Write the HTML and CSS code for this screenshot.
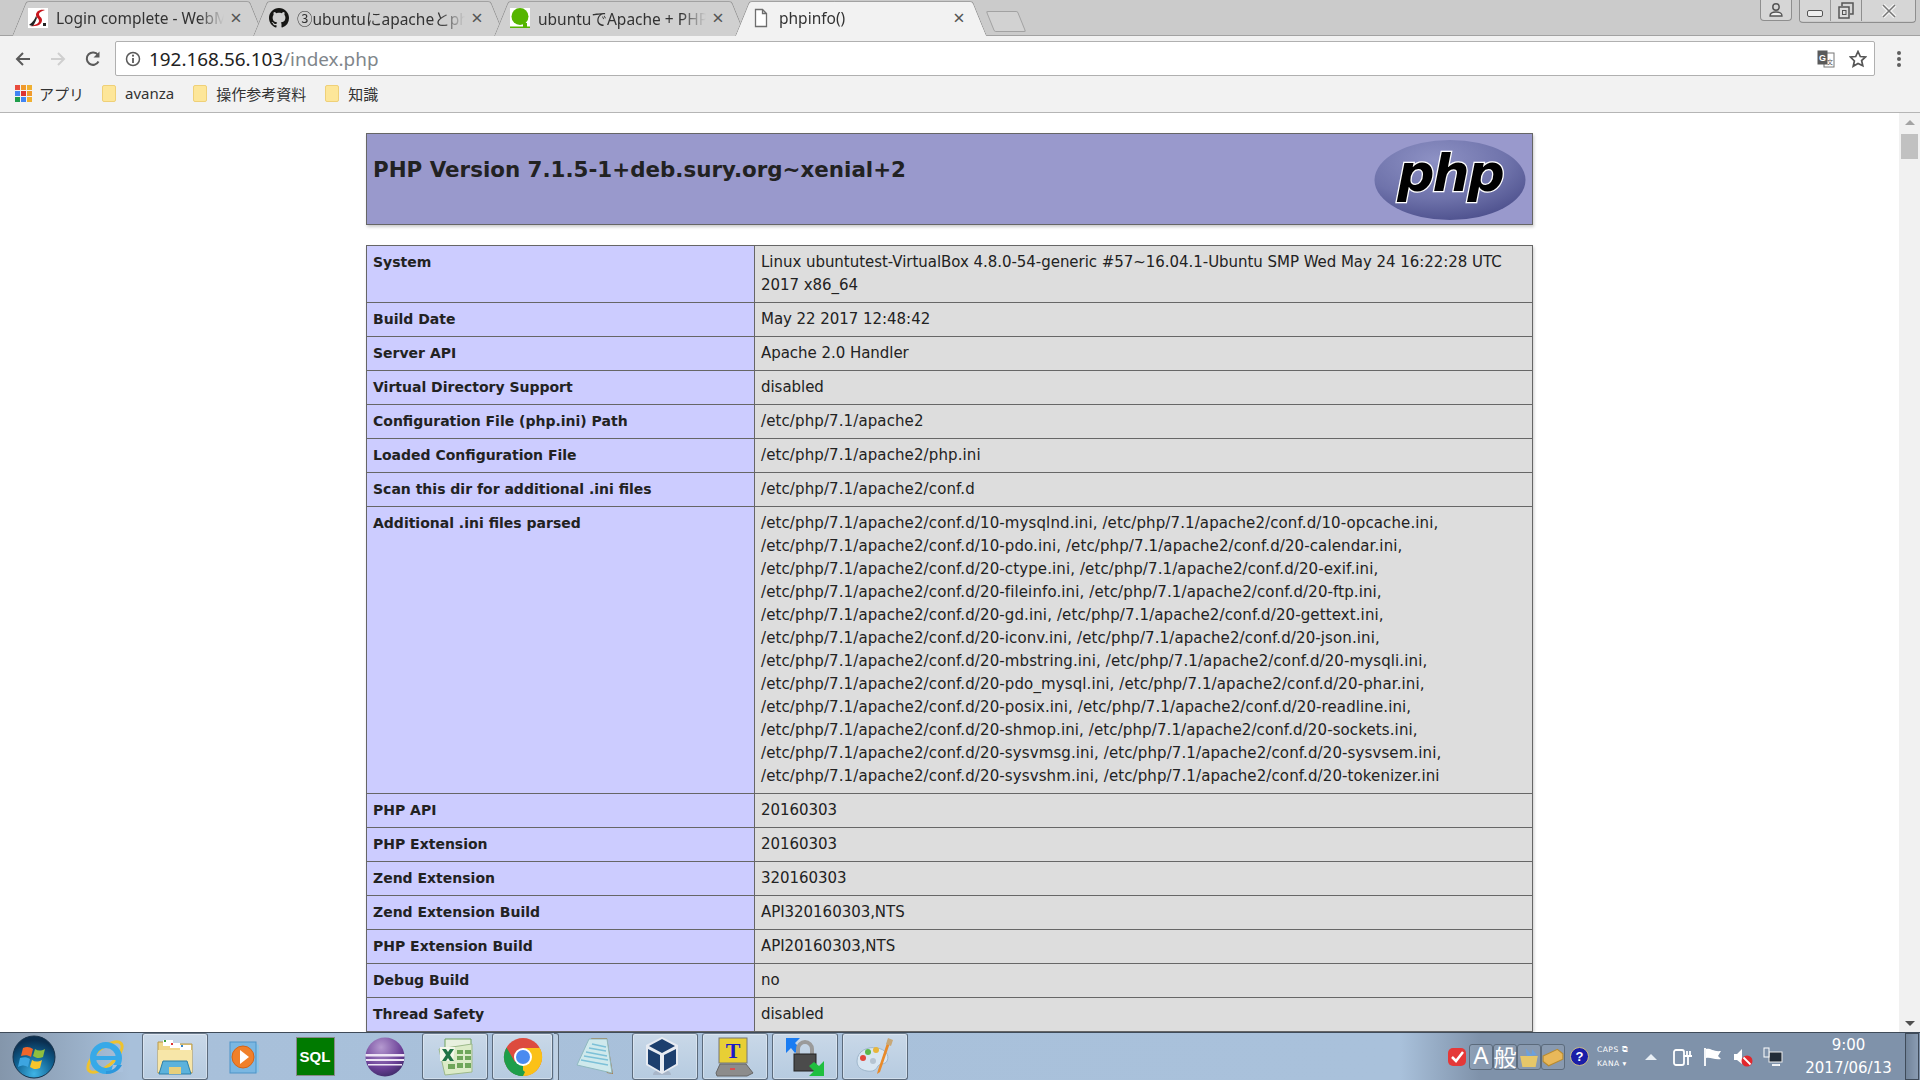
FILE: index.html
```html
<!DOCTYPE html>
<html lang="ja">
<head>
	<meta charset="UTF-8">
	<title>phpinfo()</title>
	<link rel="stylesheet" href="styles.css">
</head>
<body>
	<div class="tabstrip">
		<div class="tab">
			<svg class="favicon" viewBox="0 0 20 20"><rect width="20" height="20" fill="#fff"/><path d="M17 2C11 1 8 4 8 7c0 3 3 3 3 6 0 2-3 4-9 5 8 1 12-2 12-6 0-3-3-3-3-6 0-1 2-3 6-4z" fill="#c8161d"/><path d="M8 8c-1 3-3 6-7 9l4 1c2-3 3-6 4-8zM15 15l3 0 0 3-3 0z" fill="#222"/></svg>
			<span class="tab-title">Login complete - WebM</span>
			<span class="tab-close">×</span>
		</div>
		<div class="tab">
			<svg class="favicon" viewBox="0 0 16 16"><path fill="#161614" d="M8 0C3.58 0 0 3.58 0 8c0 3.54 2.29 6.53 5.47 7.59.4.07.55-.17.55-.38 0-.19-.01-.82-.01-1.49-2.01.37-2.53-.49-2.69-.94-.09-.23-.48-.94-.82-1.13-.28-.15-.68-.52-.01-.53.63-.01 1.08.58 1.23.82.72 1.21 1.87.87 2.33.66.07-.52.28-.87.51-1.07-1.78-.2-3.64-.89-3.64-3.95 0-.87.31-1.59.82-2.15-.08-.2-.36-1.02.08-2.12 0 0 .67-.21 2.2.82.64-.18 1.32-.27 2-.27s1.36.09 2 .27c1.53-1.04 2.2-.82 2.2-.82.44 1.1.16 1.92.08 2.12.51.56.82 1.27.82 2.15 0 3.07-1.87 3.75-3.65 3.95.29.25.54.73.54 1.48 0 1.07-.01 1.93-.01 2.2 0 .21.15.46.55.38A8.01 8.01 0 0 0 16 8c0-4.42-3.58-8-8-8z"/></svg>
			<span class="tab-title">③ubuntuにapacheとphp</span>
			<span class="tab-close">×</span>
		</div>
		<div class="tab">
			<svg class="favicon" viewBox="0 0 20 20"><rect width="20" height="20" fill="#fff"/><circle cx="10" cy="8.500" r="8.500" fill="#55b500"/><path d="M0 18.500h20V20H0zM13 15h4v4h-4z" fill="#55b500"/></svg>
			<span class="tab-title">ubuntuでApache + PHP</span>
			<span class="tab-close">×</span>
		</div>
		<div class="tab active">
			<svg class="favicon" viewBox="0 0 20 20"><path d="M4.500 1.500h7l4 4v13h-11zM11.500 1.500v4h4" fill="#fff" stroke="#6e6e6e" stroke-width="1.300"/></svg>
			<span class="tab-title">phpinfo()</span>
			<span class="tab-close">×</span>
		</div>
		<div class="newtab"></div>
		<div class="winbtns">
			<div class="winbtn profile">
				<svg viewBox="0 0 16 16" width="16" height="16"><circle cx="8" cy="5" r="3.200" fill="none" stroke="#555" stroke-width="1.500"/><path d="M2 14c0-3 3-4 6-4s6 1 6 4z" fill="#f0f0f0" stroke="#555" stroke-width="1.300"/></svg>
			</div>
			<div class="wingroup">
				<div class="winbtn win-min"><span class="min-glyph"></span></div>
				<div class="winbtn win-max">
					<svg viewBox="0 0 18 18" width="18" height="18"><path d="M5 4V1h11v11h-3" fill="none" stroke="#555" stroke-width="1.500"/><rect x="2" y="5" width="10" height="11" fill="#ddd" stroke="#555" stroke-width="1.500"/><rect x="5.500" y="8.500" width="3.500" height="4" fill="none" stroke="#555"/></svg>
				</div>
				<div class="winbtn win-close">
					<svg viewBox="0 0 16 14" width="16" height="14"><path d="M2 1l12 12M14 1L2 13" stroke="#f3f3f3" stroke-width="4"/><path d="M2 1l12 12M14 1L2 13" stroke="#777" stroke-width="1.500"/></svg>
				</div>
			</div>
		</div>
	</div>

	<div class="toolbar">
		<svg class="nav-icon" viewBox="0 0 18 18"><path d="M16 9H3M9 3L3 9l6 6" fill="none" stroke="#5a5a5a" stroke-width="2"/></svg>
		<svg class="nav-icon" viewBox="0 0 18 18"><path d="M2 9h13M9 3l6 6-6 6" fill="none" stroke="#cfcfcf" stroke-width="2"/></svg>
		<svg class="nav-icon" viewBox="0 0 18 18"><path d="M14.500 11.500A6.200 6.200 0 1 1 14 5" fill="none" stroke="#5a5a5a" stroke-width="2"/><path d="M15.500 1.500v6h-6z" fill="#5a5a5a"/></svg>
		<div class="omnibox">
			<svg class="info-icon" viewBox="0 0 16 16"><circle cx="8" cy="8" r="6.500" fill="none" stroke="#5a5a5a" stroke-width="1.500"/><path d="M8 7v5" stroke="#5a5a5a" stroke-width="1.800"/><circle cx="8" cy="4.700" r="1.100" fill="#5a5a5a"/></svg>
			<span class="url">192.168.56.103<span class="url-path">/index.php</span></span>
			<svg class="translate-icon" viewBox="0 0 18 18"><rect x="7" y="3" width="10" height="14" fill="#fff" stroke="#777"/><rect x="0.500" y="0.500" width="10" height="14" fill="#5a5a5a"/><text x="2" y="11" class="translate-g">G</text><text x="10" y="14" class="translate-x">文</text></svg>
			<svg class="star-icon" viewBox="0 0 18 18"><path d="M9 1.500l2.300 5 5.200.5-3.900 3.500 1.200 5.300L9 13.500l-4.800 2.800 1.200-5.300L1.500 7l5.200-.5z" fill="none" stroke="#555" stroke-width="1.700"/></svg>
		</div>
		<div class="kebab"><i></i><i></i><i></i></div>
	</div>

	<div class="bookmarks">
		<div class="bm bm-apps">
			<span class="apps-grid">
				<i class="c1"></i><i class="c2"></i><i class="c3"></i>
				<i class="c4"></i><i class="c5"></i><i class="c2"></i>
				<i class="c6"></i><i class="c7"></i><i class="c3"></i>
			</span>
			アプリ
		</div>
		<div class="bm"><span class="folder"></span>avanza</div>
		<div class="bm"><span class="folder"></span>操作参考資料</div>
		<div class="bm"><span class="folder"></span>知識</div>
	</div>

	<div class="viewport">
		<div class="page">
			<table class="php-head">
				<tr>
					<td class="head-cell">
						<svg class="php-logo" viewBox="0 0 152 82">
							<defs>
								<radialGradient id="logoFill" cx="0.400" cy="0.250" r="0.800">
									<stop offset="0" stop-color="#8d91c4"/>
									<stop offset="0.600" stop-color="#6f73ab"/>
									<stop offset="1" stop-color="#4c4f8c"/>
								</radialGradient>
							</defs>
							<ellipse cx="76" cy="41" rx="75.500" ry="40" fill="url(#logoFill)"/>
							<text x="76" y="52" class="php-word">php</text>
						</svg>
						<h1 class="head-title">PHP Version 7.1.5-1+deb.sury.org~xenial+2</h1>
					</td>
				</tr>
			</table>
			<table class="info">
				<tr><td class="e">System</td><td class="v">Linux ubuntutest-VirtualBox 4.8.0-54-generic #57~16.04.1-Ubuntu SMP Wed May 24 16:22:28 UTC<br>2017 x86_64</td></tr>
				<tr><td class="e">Build Date</td><td class="v">May 22 2017 12:48:42</td></tr>
				<tr><td class="e">Server API</td><td class="v">Apache 2.0 Handler</td></tr>
				<tr><td class="e">Virtual Directory Support</td><td class="v">disabled</td></tr>
				<tr><td class="e">Configuration File (php.ini) Path</td><td class="v path">/etc/php/7.1/apache2</td></tr>
				<tr><td class="e">Loaded Configuration File</td><td class="v path">/etc/php/7.1/apache2/php.ini</td></tr>
				<tr><td class="e">Scan this dir for additional .ini files</td><td class="v path">/etc/php/7.1/apache2/conf.d</td></tr>
				<tr><td class="e">Additional .ini files parsed</td><td class="v path">/etc/php/7.1/apache2/conf.d/10-mysqlnd.ini, /etc/php/7.1/apache2/conf.d/10-opcache.ini,<br>/etc/php/7.1/apache2/conf.d/10-pdo.ini, /etc/php/7.1/apache2/conf.d/20-calendar.ini,<br>/etc/php/7.1/apache2/conf.d/20-ctype.ini, /etc/php/7.1/apache2/conf.d/20-exif.ini,<br>/etc/php/7.1/apache2/conf.d/20-fileinfo.ini, /etc/php/7.1/apache2/conf.d/20-ftp.ini,<br>/etc/php/7.1/apache2/conf.d/20-gd.ini, /etc/php/7.1/apache2/conf.d/20-gettext.ini,<br>/etc/php/7.1/apache2/conf.d/20-iconv.ini, /etc/php/7.1/apache2/conf.d/20-json.ini,<br>/etc/php/7.1/apache2/conf.d/20-mbstring.ini, /etc/php/7.1/apache2/conf.d/20-mysqli.ini,<br>/etc/php/7.1/apache2/conf.d/20-pdo_mysql.ini, /etc/php/7.1/apache2/conf.d/20-phar.ini,<br>/etc/php/7.1/apache2/conf.d/20-posix.ini, /etc/php/7.1/apache2/conf.d/20-readline.ini,<br>/etc/php/7.1/apache2/conf.d/20-shmop.ini, /etc/php/7.1/apache2/conf.d/20-sockets.ini,<br>/etc/php/7.1/apache2/conf.d/20-sysvmsg.ini, /etc/php/7.1/apache2/conf.d/20-sysvsem.ini,<br>/etc/php/7.1/apache2/conf.d/20-sysvshm.ini, /etc/php/7.1/apache2/conf.d/20-tokenizer.ini</td></tr>
				<tr><td class="e">PHP API</td><td class="v">20160303</td></tr>
				<tr><td class="e">PHP Extension</td><td class="v">20160303</td></tr>
				<tr><td class="e">Zend Extension</td><td class="v">320160303</td></tr>
				<tr><td class="e">Zend Extension Build</td><td class="v">API320160303,NTS</td></tr>
				<tr><td class="e">PHP Extension Build</td><td class="v">API20160303,NTS</td></tr>
				<tr><td class="e">Debug Build</td><td class="v">no</td></tr>
				<tr><td class="e">Thread Safety</td><td class="v">disabled</td></tr>
			</table>
		</div>
		<div class="scrollbar">
			<span class="arrow-up"></span>
			<span class="thumb"></span>
			<span class="arrow-down"></span>
		</div>
	</div>

	<div class="taskbar">
		<div class="slots">
			<div class="slot">
				<svg class="ic-orb" viewBox="0 0 44 44">
					<defs><radialGradient id="orb" cx="0.500" cy="0.900" r="0.800"><stop offset="0" stop-color="#3fb4e6"/><stop offset="0.600" stop-color="#0f5f8f"/><stop offset="1" stop-color="#0b2f50"/></radialGradient></defs>
					<circle cx="22" cy="22" r="21" fill="url(#orb)" stroke="#16314a"/>
					<path d="M11 13c4-2 7-1 10 1l-2 8c-3-2-6-2-10-1z" fill="#f0662a"/>
					<path d="M23 14c3 2 6 2 10 0l-2 8c-4 2-7 1-10-1z" fill="#8ebf3f"/>
					<path d="M8 23c4-1 7-1 10 1l-2 8c-3-2-6-2-10 0z" fill="#3da5e0"/>
					<path d="M20 25c3 2 6 2 10 0l-2 8c-4 2-7 1-10-1z" fill="#f7c52c"/>
				</svg>
			</div>
			<div class="slot">
				<svg class="ic" viewBox="0 0 40 40">
					<ellipse cx="20" cy="20" rx="21" ry="9" transform="rotate(-40 20 20)" fill="none" stroke="#eec22e" stroke-width="3"/>
					<circle cx="21" cy="21" r="13" fill="none" stroke="#37a9e8" stroke-width="6"/>
					<path d="M10 19h23v4H10z" fill="#37a9e8"/>
					<path d="M28 28h10v7H26z" fill="#a9c1dc"/>
					<path d="M21 34c5 0 9-2 11-6h5c-3 6-9 9-16 9z" fill="#2d97dc"/>
				</svg>
			</div>
			<div class="slot btn">
				<svg class="ic" viewBox="0 0 40 40">
					<path d="M3 5h12l2 2h20v29H3z" fill="#f0d78a" stroke="#b99a4a"/>
					<path d="M8 3h10v6H8z" fill="#fff"/><path d="M9 3h2v2H9z" fill="#3a9e3a"/>
					<path d="M15 6h10v5H15z" fill="#fff"/><path d="M16 6h2v2h-2z" fill="#d33"/>
					<path d="M25 8h11v5H25z" fill="#fff"/><path d="M26 8h2v2h-2z" fill="#38c"/>
					<path d="M3 13h34v22H3z" fill="#f7e6a8"/>
					<path d="M8 24h24l4 13H4z" fill="#5bb2dc" stroke="#2d7fa8"/>
					<path d="M14 30h12v7H14z" fill="#e7cf7c"/>
				</svg>
			</div>
			<div class="slot">
				<svg class="ic" viewBox="0 0 40 40">
					<path d="M31 7l3 1v27l-3 1z" fill="#8fc4e6"/>
					<rect x="5" y="5" width="26" height="31" fill="#7ab7e2" stroke="#4d93c7"/>
					<circle cx="18" cy="20" r="11" fill="#f0802a" stroke="#d66416"/>
					<path d="M15 13l9 7-9 7z" fill="#fff"/>
				</svg>
			</div>
			<div class="slot">
				<div class="ic-sql">SQL</div>
			</div>
			<div class="slot">
				<svg class="ic" viewBox="0 0 40 40">
					<defs><radialGradient id="ecl" cx="0.400" cy="0.250" r="0.900"><stop offset="0" stop-color="#b59ad0"/><stop offset="0.600" stop-color="#6a3f96"/><stop offset="1" stop-color="#2c2255"/></radialGradient></defs>
					<circle cx="20" cy="20" r="19.500" fill="url(#ecl)"/>
					<path d="M0.500 17h39v2.500H0.500zM1 22h38v2H1zM3 27h34v1.500H3z" fill="#eee6f5"/>
				</svg>
			</div>
			<div class="slot btn">
				<svg class="ic" viewBox="0 0 40 40">
					<path d="M10 2h26v32H10z" fill="#e8f0df" stroke="#6fa35f"/>
					<path d="M4 12l33-5v28l-27 3z" fill="#dcebc8" stroke="#9db98a"/>
					<path d="M5 10h15l-2 14H5z" fill="#f4f7ea"/>
					<path d="M7 12h4l2 3 2-3h4l-4 6 4 6h-4l-2-3-2 3H7l4-6z" fill="#217346"/>
					<path d="M22 13h6v4h-6zM30 13h6v4h-6zM22 19h6v4h-6zM30 19h6v4h-6zM13 27h7v5h-7zM22 26h6v5h-6zM30 26h6v5h-6z" fill="#6fa65a"/>
				</svg>
			</div>
			<div class="slot btn slot-stack">
				<svg class="ic" viewBox="0 0 40 40">
					<circle cx="20" cy="20" r="19" fill="#dd4b3e"/>
					<path d="M20 20L3.500 29.500A19 19 0 0 0 20 39z" fill="#1e9e4a"/>
					<path d="M20 20V39A19 19 0 0 0 36.500 10.500z" fill="#fbc117"/>
					<path d="M20 11h16.500A19 19 0 0 1 30 36L20 20z" fill="#fbc117"/>
					<path d="M3.500 10.500L13 27l9 8-2 4A19 19 0 0 1 3.500 10.500z" fill="#1e9e4a"/>
					<circle cx="20" cy="20" r="9" fill="#fff"/>
					<circle cx="20" cy="20" r="7" fill="#4a8bf0"/>
				</svg>
			</div>
			<div class="slot">
				<svg class="ic" viewBox="0 0 40 40">
					<path d="M16 1h16l6 36-6-1z" fill="#a8763c"/>
					<path d="M14 2h18l5 34-35-8z" fill="#cfe9ec" stroke="#8fb9c0"/>
					<path d="M17 7l14 3M14 11l17 3M11 15l21 4M9 19l24 4M6 23l27 5" stroke="#7cc1d8" stroke-width="1.500"/>
				</svg>
			</div>
			<div class="slot btn">
				<svg class="ic ic-vbox" viewBox="0 0 40 40">
					<path d="M20 33c-8 0-9 3-9 5h18c0-2-1-5-9-5z" fill="#a8b6c9"/>
					<path d="M20 0l16 8v20l-16 9L4 28V8z" fill="#e7ebf2"/>
					<path d="M20 2l13 7-13 7-13-7zM6 12l12 6v16l-12-7zM34 12l-12 6v16l12-7z" fill="#1d3f6e"/>
				</svg>
			</div>
			<div class="slot btn">
				<svg class="ic" viewBox="0 0 40 40">
					<rect x="4" y="1" width="28" height="25" fill="#e8cf35" stroke="#777"/>
					<text x="18" y="21" class="ic-t">T</text>
					<path d="M5 27h26l7 9-6 3H2l-1-3z" fill="#8c8c8c" stroke="#666"/>
					<path d="M15 31h5v2h-5z" fill="#d95050"/>
				</svg>
			</div>
			<div class="slot btn">
				<svg class="ic" viewBox="0 0 40 40">
					<path d="M1 1h14l-5 5 5 5-5 5-4-5-5 5z" fill="#1a7cf2"/>
					<path d="M13 18v-6a7 7 0 0 1 14 0v6" fill="none" stroke="#9a9a9a" stroke-width="4"/>
					<rect x="9" y="17" width="22" height="17" fill="#4b4b4b" stroke="#222"/>
					<path d="M39 39H24l5-5-5-5 5-4 5 4 5-5z" fill="#1fbf3f"/>
				</svg>
			</div>
			<div class="slot btn">
				<svg class="ic" viewBox="0 0 40 40">
					<path d="M2 24C2 14 13 9 22 11c8 1 13 7 10 13-2 4-7 2-9 5-2 4-5 6-11 5C6 33 2 30 2 24z" fill="#d8e6f2" stroke="#9fb7cc"/>
					<circle cx="8" cy="21" r="3" fill="#e0483c"/><circle cx="13" cy="15" r="3" fill="#58b848"/><circle cx="21" cy="13" r="3" fill="#e8b63a"/><circle cx="18" cy="24" r="3" fill="#b5c4d2"/>
					<path d="M36 3l-11 32-3 2 1-4L33 3z" fill="#e88a2a"/>
					<path d="M33 1l5 2-2 6-5-2z" fill="#c8a878"/>
				</svg>
			</div>
		</div>
		<div class="tray">
			<svg class="tray-sec" viewBox="0 0 20 20"><rect x="1" y="1" width="18" height="18" rx="5" fill="#e53838"/><path d="M5 10l4 4 7-9" fill="none" stroke="#fff" stroke-width="2.500"/></svg>
			<div class="ime">
				<span class="ime-key ime-a">A</span>
				<span class="ime-key">般</span>
				<span class="ime-key"><svg viewBox="0 0 20 20" width="22" height="22"><path d="M2 9h16l-2 10H4z" fill="#e6c76a"/><path d="M7 2l6 7H8zM13 3l4 5-5 1z" fill="#6da0dc"/></svg></span>
				<span class="ime-key"><svg viewBox="0 0 20 20" width="22" height="22"><path d="M1 9l13-6 5 4v5L6 18l-5-4z" fill="#e9b85a" stroke="#b88a30"/></svg></span>
			</div>
			<span class="help-dot">?</span>
			<div class="capskana">
				<span>CAPS ⧉</span>
				<span>KANA ▾</span>
			</div>
			<span class="tray-up"></span>
			<svg class="tray-ic" viewBox="0 0 20 20"><rect x="1" y="3" width="10" height="15" rx="2" fill="none" stroke="#fff" stroke-width="1.800"/><path d="M11 9h8M14 4v5M17 4v5M15 10v8" stroke="#fff" stroke-width="1.800"/></svg>
			<svg class="tray-ic" viewBox="0 0 20 20"><path d="M2 1v18" stroke="#fff" stroke-width="1.800"/><path d="M3 2c5-1 7 3 15 2l-3 5 3 3c-7 1-10-2-15-1z" fill="#fff"/></svg>
			<svg class="tray-ic" viewBox="0 0 20 20"><path d="M1 7h3l5-5v15l-5-4H1z" fill="#fff"/><circle cx="14" cy="14" r="5.500" fill="#e3272d"/><path d="M10.500 10.500l7 7" stroke="#fff" stroke-width="1.800"/></svg>
			<svg class="tray-ic" viewBox="0 0 20 20"><rect x="6" y="5" width="13" height="10" fill="#222c38" stroke="#eee"/><path d="M9 18h8" stroke="#fff" stroke-width="1.800"/><rect x="1" y="1" width="5" height="9" fill="#8093ab" stroke="#fff"/></svg>
			<div class="clock">
				<span class="clock-time">9:00</span>
				<span>2017/06/13</span>
			</div>
			<span class="show-desktop"></span>
		</div>
	</div>
</body>
</html>
```

FILE: styles.css
```css
html, body{ margin: 0; height: 100%; }
body{
	display: flex; flex-direction: column; height: 1080px; width: 1920px; overflow: hidden;
	font-family: "Noto Sans", "Noto Sans CJK JP", sans-serif; background: #fff;
}

/* tabs */
.tabstrip{
	display: flex; height: 35px; flex: none; padding-left: 12px; box-sizing: content-box;
	background: #cbcbcb; border-bottom: 1px solid #a2a2a2; isolation: isolate;
}
.tab{
	position: relative; width: 252px; height: 34px; margin: 1px -11px 0 0; padding: 0 22px 0 16px;
	box-sizing: border-box; display: flex; align-items: center; font-size: 15.500px; color: #333;
}
.tab::before, .tab::after{
	content: ''; position: absolute; top: 0; bottom: -1px; width: 55%; z-index: -1;
	background: #d0d0d0; border-top: 1px solid #a2a2a2; box-sizing: border-box;
}
.tab::before{
	left: 0; border-left: 1px solid #929292; transform: skewX(-22deg); transform-origin: bottom left;
	border-top-left-radius: 3px;
}
.tab::after{
	right: 0; border-right: 1px solid #929292; transform: skewX(22deg); transform-origin: bottom right;
	border-top-right-radius: 3px;
}
.tab.active::before, .tab.active::after{ background: #f2f2f2; }
.favicon{ width: 20px; height: 20px; flex: none; }
.tab-title{
	flex: 1; margin-left: 8px; white-space: nowrap; overflow: hidden;
	-webkit-mask-image: linear-gradient(90deg, #000 85%, transparent);
	mask-image: linear-gradient(90deg, #000 85%, transparent);
}
.tab-close{ flex: none; width: 12px; margin-left: 6px; font-size: 20px; line-height: 20px; color: #555; text-align: center; }
.newtab{
	width: 30px; height: 19px; margin: 11px 0 0 14px; background: #d2d2d2;
	border: 1px solid #a2a2a2; border-radius: 2px; transform: skewX(22deg);
}
.winbtns{ display: flex; gap: 7px; margin-left: auto; margin-right: 4px; height: 22px; }
.winbtn{
	display: flex; align-items: center; justify-content: center; height: 21px;
	background: #d6d6d6; box-sizing: border-box;
}
.profile{ width: 32px; border: 1px solid #8e8e8e; border-top: 0; border-radius: 0 0 4px 4px; }
.wingroup{ display: flex; border: 1px solid #8e8e8e; border-top: 0; border-radius: 0 0 4px 4px; overflow: hidden; height: 22px; }
.win-min{ width: 31px; border-right: 1px solid #9a9a9a; }
.win-max{ width: 31px; border-right: 1px solid #8e8e8e; }
.win-close{ width: 53px; }
.min-glyph{ width: 14px; height: 5px; margin-top: 5px; border: 1px solid #555; border-radius: 2px; background: #eee; }

/* toolbar */
.toolbar{
	display: flex; align-items: center; flex: none; height: 40px; padding: 5px 0 0 14px;
	box-sizing: border-box; background: #f2f2f2;
}
.nav-icon{ width: 18px; height: 18px; flex: none; margin-right: 17px; }
.nav-icon:nth-child(3){ margin-right: 13px; }
.omnibox{
	display: flex; align-items: center; width: 1760px; height: 35px; flex: none; box-sizing: border-box;
	background: #fff; border: 1px solid #b0b0b0; border-radius: 2px; padding: 0 7px 0 9px;
}
.info-icon{ width: 16px; height: 16px; margin-right: 8px; }
.url{ font-size: 18.900px; color: #222; letter-spacing: 0; }
.url-path{ color: #80868b; }
.translate-icon{ width: 18px; height: 18px; margin-left: auto; }
.translate-g{ font: bold 9px "Liberation Sans", sans-serif; fill: #fff; }
.translate-x{ font: 6px "Noto Sans CJK JP", sans-serif; fill: #555; }
.star-icon{ width: 18px; height: 18px; margin-left: 14px; }
.kebab{ display: flex; flex-direction: column; gap: 2px; margin-left: 22px; }
.kebab i{ display: block; width: 4px; height: 4px; border-radius: 50%; background: #5f5f5f; }

/* bookmarks */
.bookmarks{
	display: flex; align-items: center; flex: none; height: 37px; padding: 0 0 2px 15px; box-sizing: border-box;
	background: #f2f2f2; border-bottom: 1px solid #b5b5b5; font-size: 15px; color: #333;
}
.bm{ display: flex; align-items: center; margin-right: 19px; white-space: nowrap; }
.bm-apps{ margin-right: 18px; }
.apps-grid{ display: grid; grid-template-columns: repeat(3, 5px); gap: 1px; margin-right: 7px; }
.apps-grid i{ width: 5px; height: 5px; background: #e84c3d; }
.apps-grid .c2{ background: #f09a2c; }
.apps-grid .c3{ background: #f0b030; }
.apps-grid .c4{ background: #4285f4; }
.apps-grid .c5{ background: #d33; }
.apps-grid .c6{ background: #1f9e4b; }
.apps-grid .c7{ background: #4285f4; }
.folder{
	width: 14px; height: 17px; margin-right: 9px; background: #fde699;
	border: 1px solid #efd078; border-radius: 2px; box-sizing: border-box;
}

/* page */
.viewport{ flex: 1; display: flex; min-height: 0; overflow: hidden; }
.page{ flex: 1; padding-top: 20px; color: #222; font-family: "DejaVu Sans", Verdana, sans-serif; font-size: 15px; line-height: 23px; overflow: hidden; }
.php-head, .info{
	width: 1167px; margin-left: 366px; border-collapse: collapse; table-layout: fixed;
	box-shadow: 1px 2px 3px #ccc;
}
.php-head{ margin-bottom: 20px; }
.head-cell{ height: 91px; padding: 0 6px; box-sizing: border-box; background: #9999cc; border: 1px solid #666; vertical-align: top; }
.php-logo{ float: right; width: 152px; height: 82px; margin: 5px 0 0; }
.php-word{ font: italic bold 52px "DejaVu Sans", sans-serif; text-anchor: middle; fill: #000; stroke: #fff; stroke-width: 2.500px; paint-order: stroke; letter-spacing: -2px; }
.head-title{ margin: 21px 0 0; font-size: 21.400px; line-height: 30px; font-weight: bold; white-space: nowrap; }
.info td{ border: 1px solid #666; padding: 5px 6px; vertical-align: baseline; white-space: nowrap; overflow: hidden; }
.info .e{ width: 375px; background: #ccccff; font-weight: bold; font-size: 14px; }
.info .v{ background: #dddddd; letter-spacing: -.04px; }
.info .path{ letter-spacing: .11px; }

.scrollbar{ position: relative; width: 21px; flex: none; background: #f1f1f1; }
.arrow-up, .arrow-down{ position: absolute; left: 6px; width: 0; height: 0; border: 5px solid transparent; }
.arrow-up{ top: 2px; border-bottom-color: #a3a3a3; }
.arrow-down{ bottom: 1px; border-top-color: #505050; }
.thumb{ position: absolute; top: 21px; left: 2px; width: 17px; height: 25px; background: #c1c1c1; }

/* taskbar */
.taskbar{
	display: flex; flex: none; height: 48px; box-sizing: border-box; border-top: 1px solid #3f4b59;
	background: linear-gradient(90deg, #8496ab 0, #a8c0da 130px, #a9c1db 1400px, #7f92aa 1480px, #7f92aa 100%);
}
.slots{ display: grid; grid-template-columns: repeat(13, 66px); column-gap: 4px; padding-left: 2px; }
.slot{ display: flex; align-items: center; justify-content: center; height: 47px; box-sizing: border-box; position: relative; }
.slot.btn{
	border: 1px solid #5c6b7c; border-top-color: #6d7c8c; border-radius: 3px; margin-top: 0;
	background: linear-gradient(180deg, #c9d8e8, #b6cbe0);
	box-shadow: inset 0 0 0 1px rgba(255,255,255,.35);
}
.slot-stack{ margin-right: 5px; overflow: visible; }
.slot-stack::after{
	content: ''; position: absolute; top: -1px; right: -7px; width: 4px; height: 47px;
	border: 1px solid #5c6b7c; border-left: 0; border-radius: 0 3px 3px 0; background: #bed0e3;
}
.ic{ width: 40px; height: 40px; flex: none; }
.ic-vbox{ margin-left: -6px; }
.ic-orb{ width: 44px; height: 44px; margin-left: -2px; }
.ic-t{ font: bold 22px "Liberation Serif", serif; fill: #1a1ac8; text-anchor: middle; }
.ic-sql{
	width: 39px; height: 39px; background: #007a00; border: 1px solid #888; box-sizing: border-box;
	font: bold 15px/37px "Liberation Sans", sans-serif; color: #fff; text-align: center;
}

.tray{ position: relative; display: flex; align-items: center; margin-left: auto; padding-right: 1px; color: #fff; }
.tray-sec{ width: 20px; height: 20px; margin-right: 2px; }
.ime{ display: flex; }
.ime-key{
	display: flex; align-items: center; justify-content: center; width: 24px; height: 26px; box-sizing: border-box;
	border: 1px solid #5c6b7c; border-radius: 3px; background: rgba(255,255,255,.08);
	color: #fff; font: 23px/1 "Noto Sans CJK JP", sans-serif;
}
.ime-a{ font-family: "Liberation Sans", sans-serif; }
.help-dot{
	width: 19px; height: 19px; margin-left: 5px; border-radius: 50%; background: #1a1ea8; border: 1px solid #c9b98a;
	box-sizing: border-box; color: #fff; font: bold 13px/17px "Liberation Sans", sans-serif; text-align: center;
}
.capskana{ display: flex; flex-direction: column; gap: 4px; width: 48px; margin-left: 8px; font: 7.500px/10px "DejaVu Sans", sans-serif; letter-spacing: .5px; white-space: nowrap; }
.tray-up{ width: 0; height: 0; margin: 0 16px 0 0; border: 6px solid transparent; border-top: 0; border-bottom: 6px solid #e8eef4; }
.tray-ic{ width: 20px; height: 20px; margin-right: 10px; }
.clock{ display: flex; flex-direction: column; align-items: center; width: 95px; margin-left: 8px; font: 15px/23px "DejaVu Sans", sans-serif; }
.clock-time{ font-size: 15px; }
.show-desktop{
	width: 14px; height: 47px; margin-left: 9px; box-sizing: border-box; border: 1px solid #3f4b59;
	background: linear-gradient(90deg, #72849a, #8a9cb2);
}
```
